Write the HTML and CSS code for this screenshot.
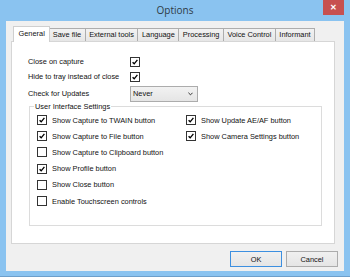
FILE: index.html
```html
<!DOCTYPE html>
<html lang="en">
<head>
  <meta charset="UTF-8" />
  <title>Options</title>
  <link rel="stylesheet" href="styles.css">
</head>
<body>

  <div class="window">
    <div class="titlebar">
      <span class="title">Options</span>
      <span class="close-btn">&#x2715;</span>
    </div>

    <div class="client">
      <!-- tab strip -->
      <div class="tabs">
        <div class="tab active">General</div>
        <div class="tab">Save file</div>
        <div class="tab">External tools</div>
        <div class="tab">Language</div>
        <div class="tab">Processing</div>
        <div class="tab">Voice Control</div>
        <div class="tab">Informant</div>
      </div>

      <div class="panel">
        <div class="settings">
          <span>Close on capture</span>
          <span class="check on"><svg viewBox="0 0 10 10"><path d="M2 5.2 L4 7.3 L8 2.4"/></svg></span>

          <span>Hide to tray instead of close</span>
          <span class="check on"><svg viewBox="0 0 10 10"><path d="M2 5.2 L4 7.3 L8 2.4"/></svg></span>

          <span class="select-label">Check for Updates</span>
          <div class="select">
            <span>Never</span>
            <svg viewBox="0 0 6 4"><path d="M0.5 0.5 L3 3 L5.5 0.5"/></svg>
          </div>
        </div>

        <fieldset class="group">
          <legend>User Interface Settings</legend>
          <div class="cols">
            <div class="col first">
              <label class="item"><span class="check on"><svg viewBox="0 0 10 10"><path d="M2 5.2 L4 7.3 L8 2.4"/></svg></span>Show Capture to TWAIN button</label>
              <label class="item"><span class="check on"><svg viewBox="0 0 10 10"><path d="M2 5.2 L4 7.3 L8 2.4"/></svg></span>Show Capture to File button</label>
              <label class="item"><span class="check"></span>Show Capture to Clipboard button</label>
              <label class="item"><span class="check on"><svg viewBox="0 0 10 10"><path d="M2 5.2 L4 7.3 L8 2.4"/></svg></span>Show Profile button</label>
              <label class="item"><span class="check"></span>Show Close button</label>
              <label class="item"><span class="check"></span>Enable Touchscreen controls</label>
            </div>
            <div class="col">
              <label class="item"><span class="check on"><svg viewBox="0 0 10 10"><path d="M2 5.2 L4 7.3 L8 2.4"/></svg></span>Show Update AE/AF button</label>
              <label class="item"><span class="check on"><svg viewBox="0 0 10 10"><path d="M2 5.2 L4 7.3 L8 2.4"/></svg></span>Show Camera Settings button</label>
            </div>
          </div>
        </fieldset>
      </div>

      <div class="buttons">
        <button class="btn default">OK</button>
        <button class="btn">Cancel</button>
      </div>
    </div>
  </div>

</body>
</html>
```

FILE: styles.css
```css
body {
  margin: 0;
  padding: 0;
  font-family: 'Liberation Sans', Arial, sans-serif;
  font-size: 7.4px;
  color: #111;
}

.window {
  width: 350px;
  height: 277px;
  background-color: #8ac3f0;
  box-sizing: border-box;
  border-bottom: 1px solid #6d9fcb;
  overflow: hidden;
}

.titlebar {
  position: relative;
  height: 21px;
  text-align: center;
}

.title {
  font-family: 'Open Sans', 'Liberation Sans', sans-serif;
  font-size: 10px;
  line-height: 21px;
  color: #2f3a45;
}

.close-btn {
  position: absolute;
  top: 0;
  right: 6px;
  width: 21px;
  height: 15px;
  background-color: #c75050;
  color: #fff;
  font-size: 8px;
  font-weight: bold;
  line-height: 15px;
  text-align: center;
}

.client {
  margin: 0 6px;
  height: 250px;
  background-color: #f0f0f0;
  padding-top: 6px;
  box-sizing: border-box;
}

/* tabs */
.tabs {
  display: flex;
  align-items: flex-end;
  margin-left: 9px;
  height: 14px;
  position: relative;
  z-index: 2;
}

.tab {
  height: 12px;
  line-height: 12px;
  padding: 0 3.5px;
  border: 1px solid #adadad;
  border-bottom: none;
  margin-left: -1px;
  background: linear-gradient(#f2f2f2, #e6e6e6);
  white-space: nowrap;
}

.tab.active {
  height: 15px;
  line-height: 14px;
  background: #fff;
  border-color: #cfcfcf;
  margin: 0 -1px -1px -2px;
  padding: 0 4.5px;
  position: relative;
  z-index: 3;
}

.panel {
  margin-left: 5px;
  width: 324px;
  height: 203px;
  box-sizing: border-box;
  background-color: #fff;
  border: 1px solid #d6d6d6;
  padding-left: 16px;
  padding-top: 12px;
}

.settings {
  display: grid;
  grid-template-columns: 102px auto;
  grid-auto-rows: 15px;
  align-items: center;
}

.select-label {
  margin-top: 4px;
}

.select {
  margin-top: 4px;
  width: 68px;
  height: 16px;
  box-sizing: border-box;
  border: 1px solid #acacac;
  background: linear-gradient(#f2f2f2, #e5e5e5);
  display: flex;
  align-items: center;
  justify-content: space-between;
  padding: 0 4px 0 2px;
}

.select svg {
  width: 5px;
  height: 4px;
  fill: none;
  stroke: #333;
  stroke-width: 1.2;
}

.check {
  width: 10px;
  height: 10px;
  box-sizing: border-box;
  border: 1px solid #333;
  background-color: #fff;
  display: inline-flex;
}

.check svg {
  width: 8px;
  height: 8px;
  fill: none;
  stroke: #000;
  stroke-width: 1.7;
}

/* user interface group */
.group {
  margin: 2px 0 0 1px;
  width: 293px;
  height: 125px;
  box-sizing: border-box;
  border: 1px solid #dcdcdc;
  padding: 0 7px;
}

.group legend {
  padding: 0 1px;
  margin-left: -3px;
  line-height: 11px;
}

.cols {
  display: flex;
}

.col.first {
  width: 149px;
}

.item {
  display: flex;
  align-items: center;
  gap: 5px;
  height: 16.2px;
  white-space: nowrap;
}

.buttons {
  display: flex;
  justify-content: flex-end;
  gap: 4px;
  margin-top: 7px;
  margin-right: 6px;
}

.btn {
  width: 52px;
  height: 16px;
  padding: 0;
  font-family: 'Liberation Sans', Arial, sans-serif;
  font-size: 7.4px;
  color: #111;
  border: 1px solid #acacac;
  background: linear-gradient(#f0f0f0, #e5e5e5);
}

.btn.default {
  border-color: #3c8fe0;
}
```
